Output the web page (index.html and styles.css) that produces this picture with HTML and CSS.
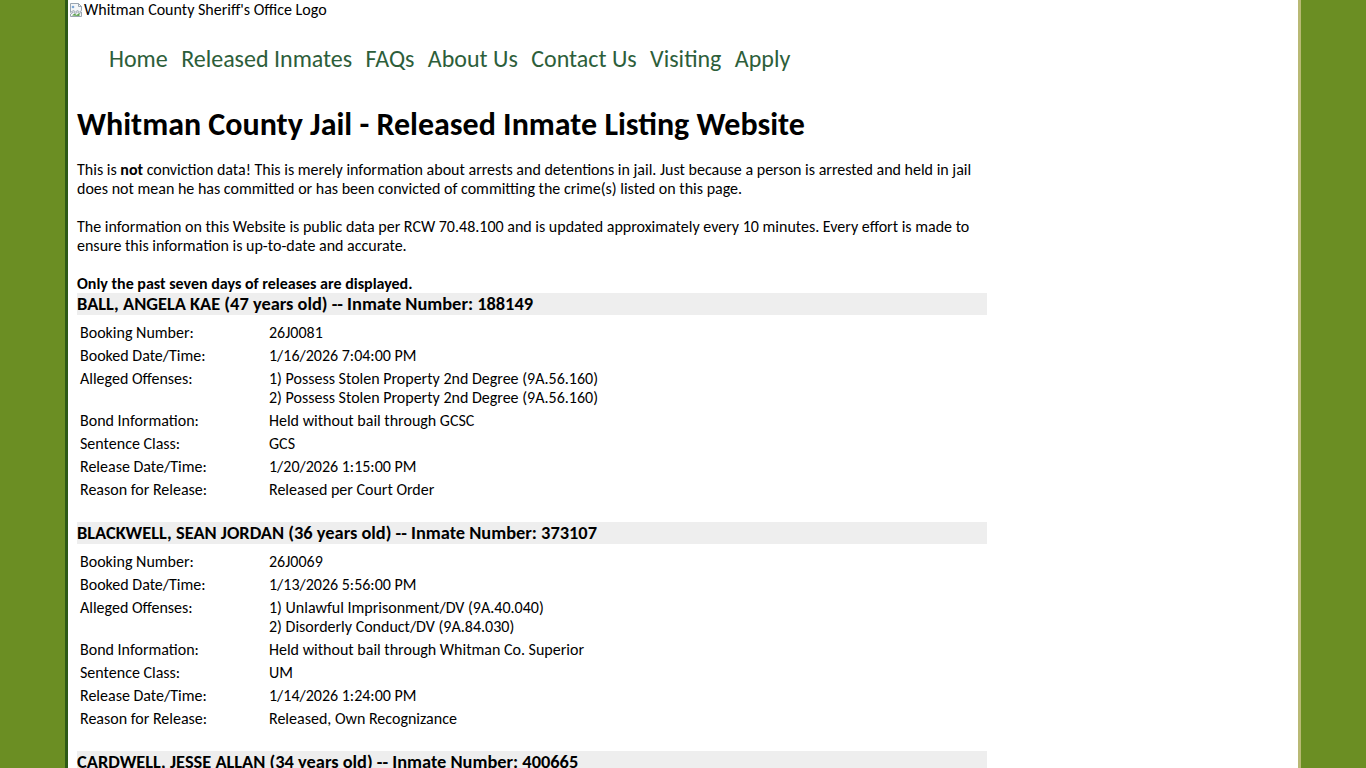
FILE: index.html
```html
<!DOCTYPE html>
<html lang="en">
<head>
<meta charset="utf-8">
<title>Whitman County Jail - Released Inmate Listing Website</title>
<link rel="stylesheet" href="styles.css">
</head>
<body>
<div class="page">
  <div class="logo">
    <svg class="broken" width="16" height="16" viewBox="0 0 16 16" aria-hidden="true">
      <path d="M2.5 1.5h8l3 3v4l-2 1.5-2-1.5-2 1.5-2-1.5-3 2z" fill="#f4f6f8" stroke="#9aa5b1"/>
      <path d="M10.5 1.5v3h3" fill="none" stroke="#9aa5b1"/>
      <path d="M2.5 12l3-2 2 1.5 2-1.5 2 1.5 2-1.5v4.5h-11z" fill="#f4f6f8" stroke="#9aa5b1"/>
      <path d="M4 13.5l2.5-2 2 1.5 3-2v3z" fill="#5aa04a"/>
      <circle cx="5" cy="5" r="1.3" fill="#7aa6d6"/>
    </svg><span class="logo-alt">Whitman County Sheriff's Office Logo</span>
  </div>
  <nav class="nav">
    <a href="#">Home</a>
    <a href="#">Released Inmates</a>
    <a href="#">FAQs</a>
    <a href="#">About Us</a>
    <a href="#">Contact Us</a>
    <a href="#">Visiting</a>
    <a href="#">Apply</a>
  </nav>
  <main class="content">
    <h1 class="title">Whitman County Jail - Released Inmate Listing Website</h1>
    <p class="intro">This is <b>not</b> conviction data! This is merely information about arrests and detentions in jail. Just because a person is arrested and held in jail does not mean he has committed or has been convicted of committing the crime(s) listed on this page.</p>
    <p class="intro">The information on this Website is public data per RCW 70.48.100 and is updated approximately every 10 minutes. Every effort is made to ensure this information is up-to-date and accurate.</p>
    <p class="intro note"><b>Only the past seven days of releases are displayed.</b></p>

    <section class="record">
      <h2 class="record-head">BALL, ANGELA KAE (47 years old) -- Inmate Number: 188149</h2>
      <table class="record-table">
        <tr><td class="label">Booking Number:</td><td>26J0081</td></tr>
        <tr><td class="label">Booked Date/Time:</td><td>1/16/2026 7:04:00 PM</td></tr>
        <tr><td class="label">Alleged Offenses:</td><td>1) Possess Stolen Property 2nd Degree (9A.56.160)<br>2) Possess Stolen Property 2nd Degree (9A.56.160)</td></tr>
        <tr><td class="label">Bond Information:</td><td>Held without bail through GCSC</td></tr>
        <tr><td class="label">Sentence Class:</td><td>GCS</td></tr>
        <tr><td class="label">Release Date/Time:</td><td>1/20/2026 1:15:00 PM</td></tr>
        <tr><td class="label">Reason for Release:</td><td>Released per Court Order</td></tr>
      </table>
    </section>

    <section class="record">
      <h2 class="record-head">BLACKWELL, SEAN JORDAN (36 years old) -- Inmate Number: 373107</h2>
      <table class="record-table">
        <tr><td class="label">Booking Number:</td><td>26J0069</td></tr>
        <tr><td class="label">Booked Date/Time:</td><td>1/13/2026 5:56:00 PM</td></tr>
        <tr><td class="label">Alleged Offenses:</td><td>1) Unlawful Imprisonment/DV (9A.40.040)<br>2) Disorderly Conduct/DV (9A.84.030)</td></tr>
        <tr><td class="label">Bond Information:</td><td>Held without bail through Whitman Co. Superior</td></tr>
        <tr><td class="label">Sentence Class:</td><td>UM</td></tr>
        <tr><td class="label">Release Date/Time:</td><td>1/14/2026 1:24:00 PM</td></tr>
        <tr><td class="label">Reason for Release:</td><td>Released, Own Recognizance</td></tr>
      </table>
    </section>

    <section class="record">
      <h2 class="record-head">CARDWELL, JESSE ALLAN (34 years old) -- Inmate Number: 400665</h2>
      <table class="record-table">
        <tr><td class="label">Booking Number:</td><td>26J0075</td></tr>
        <tr><td class="label">Booked Date/Time:</td><td>1/15/2026 2:10:00 AM</td></tr>
        <tr><td class="label">Alleged Offenses:</td><td>1) Driving Under the Influence (46.61.502)</td></tr>
        <tr><td class="label">Bond Information:</td><td>Released on Bail</td></tr>
        <tr><td class="label">Sentence Class:</td><td>GM</td></tr>
        <tr><td class="label">Release Date/Time:</td><td>1/15/2026 9:30:00 AM</td></tr>
        <tr><td class="label">Reason for Release:</td><td>Bail Posted</td></tr>
      </table>
    </section>
  </main>
</div>
</body>
</html>
```

FILE: styles.css
```css
html, body {
  margin: 0;
  padding: 0;
}
body {
  background: #6b8e23;
  font-family: Carlito, Lato, "Liberation Sans", sans-serif;
  font-size: 16px;
  color: #000;
}
.page {
  width: 1230px;
  margin: 0 auto;
  background: #fff;
  border-left: 3px solid #2d5a16;
  border-right: 3px solid #b9b974;
  min-height: 100vh;
}
.logo {
  display: flex;
  align-items: center;
  height: 20px;
  font-size: 16px;
  line-height: 20px;
}
.broken {
  display: block;
  flex: none;
}
.nav {
  display: flex;
  gap: 13.4px;
  padding: 24px 0 0 41px;
  font-size: 24px;
  line-height: 29px;
}
.nav a {
  color: #2d5e3a;
  text-decoration: none;
}
.content {
  width: 910px;
  padding: 32px 0 0 9px;
}
.title {
  margin: 0 0 15px;
  font-size: 32px;
  line-height: 40px;
  font-weight: bold;
}
.intro {
  margin: 0 0 19px;
  line-height: 19px;
}
.intro.note {
  margin: 0;
}
.record {
  margin-bottom: 20px;
}
.record-head {
  margin: 0;
  background: #eeeeee;
  font-size: 18.4px;
  line-height: 22px;
  font-weight: bold;
}
.record-table {
  margin-top: 5px;
  border-spacing: 2px;
}
.record-table td {
  padding: 1px;
  line-height: 19px;
  vertical-align: top;
}
.record-table td.label {
  width: 185px;
}
```
